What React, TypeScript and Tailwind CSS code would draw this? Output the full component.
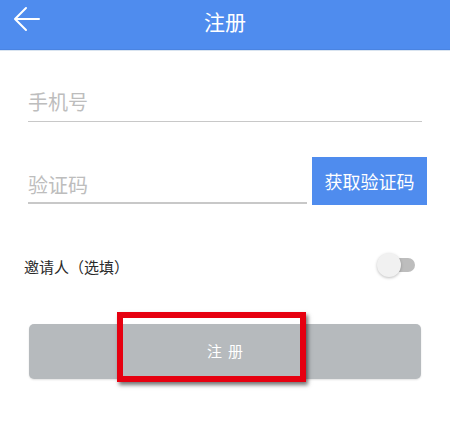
import {useState} from 'react';

const FONT = "font-['Noto_Sans_CJK_SC','Noto_Sans',sans-serif]";

function BackArrow() {
  return (
    <svg width="28" height="26" viewBox="0 0 28 26" fill="none">
      <path
        d="M26 13H3M13 2L2 13l11 11"
        stroke="white"
        strokeWidth="2"
        strokeLinecap="round"
        strokeLinejoin="round"
      />
    </svg>
  );
}

function Toggle({on, onChange}: {on: boolean; onChange: (v: boolean) => void}) {
  return (
    <button
      type="button"
      onClick={() => onChange(!on)}
      className="relative w-[38px] h-[26px] shrink-0"
    >
      <span className="absolute right-0 top-[6px] w-[26px] h-[14px] rounded-full bg-[#bdbdbd]" />
      <span
        className={
          on
            ? 'absolute right-0 top-px w-[24px] h-[24px] rounded-full bg-[#4f8cee] shadow-[0_1px_3px_rgba(0,0,0,0.25)]'
            : 'absolute left-0 top-px w-[24px] h-[24px] rounded-full bg-[#f1f1f1] shadow-[0_1px_3px_rgba(0,0,0,0.25)]'
        }
      />
    </button>
  );
}

export default function App() {
  const [phone, setPhone] = useState('');
  const [code, setCode] = useState('');
  const [invite, setInvite] = useState(false);

  return (
    <div className={`w-[450px] min-h-[426px] bg-white ${FONT}`}>
      <header className="h-[50px] bg-[#4f8cee] border-b border-[#4a84e2] flex items-center relative">
        <button className="absolute left-[13px] top-[6px]">
          <BackArrow/>
        </button>
        <h1 className="flex-1 text-center text-white text-[21px] leading-[26px] -mt-[8px]">注册</h1>
      </header>
      <div className="h-px bg-[#d9e4f0]"/>

      <div className="pl-[28px] pr-[28px] mt-[37px]">
        <div className="border-b-[1.5px] border-[#c8c8c8] pb-[5px]">
          <input
            value={phone}
            onChange={(e) => setPhone(e.target.value)}
            placeholder="手机号"
            className="w-full h-[28px] text-[20px] leading-[28px] text-[#333] placeholder:text-[#bdbdbd] outline-none"
          />
        </div>
      </div>

      <div className="pl-[28px] pr-[23px] mt-[35px] flex items-end gap-[5px]">
        <div className="flex-1 border-b-2 border-[#c8c8c8] pb-[3px] mb-px">
          <input
            value={code}
            onChange={(e) => setCode(e.target.value)}
            placeholder="验证码"
            className="w-full h-[28px] text-[20px] leading-[28px] text-[#333] placeholder:text-[#bdbdbd] outline-none"
          />
        </div>
        <button className="w-[115px] h-[48px] bg-[#4f8cee] text-white text-[18px] leading-[24px]">
          获取验证码
        </button>
      </div>

      <div className="pl-[24px] pr-[35px] mt-[46px] h-[28px] flex items-center justify-between">
        <span className="text-[15px] text-[#2a2a2a] leading-[20px] mt-[3px]">邀请人（选填）</span>
        <Toggle on={invite} onChange={setInvite}/>
      </div>

      <div className="pl-[29px] pr-[29px] mt-[45px]">
        <div className="relative">
          <button className="w-full h-[55px] pl-[6px] rounded-[5px] bg-[#b6babd] text-white text-[15px] tracking-[6px] shadow-[0_1px_2px_rgba(0,0,0,0.12)]">
            注册
          </button>
          <div className="absolute left-[88px] top-[-12px] w-[189px] h-[70px] border-[6px] border-[#e60010] shadow-[2px_3px_4px_rgba(0,0,0,0.55)] pointer-events-none"/>
        </div>
      </div>
    </div>
  );
}
